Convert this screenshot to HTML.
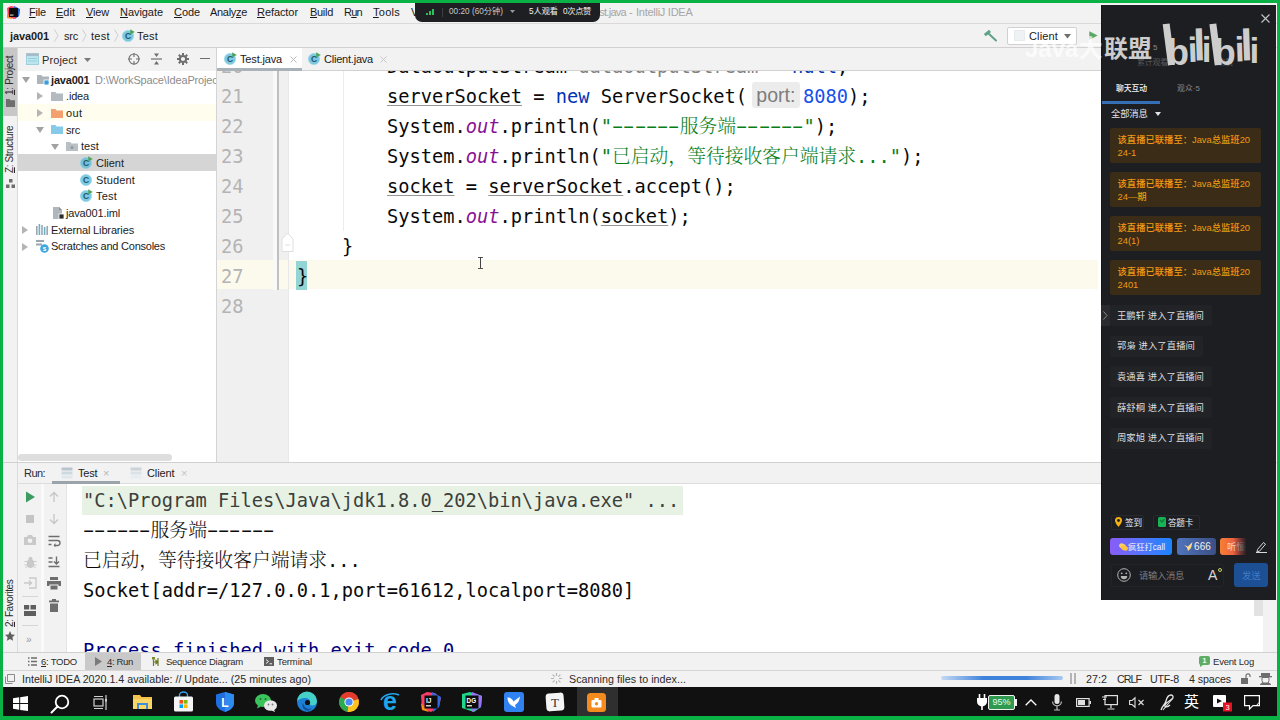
<!DOCTYPE html>
<html lang="zh">
<head>
<meta charset="utf-8">
<title>java001 - Test.java - IntelliJ IDEA</title>
<style>
*{box-sizing:border-box;margin:0;padding:0}
html,body{width:1280px;height:720px;overflow:hidden;background:#f2f2f2}
body{position:relative;font-family:"Liberation Sans","Noto Sans CJK SC",sans-serif;font-size:11px;color:#1c1c1c}
.a{position:absolute}
.t{position:absolute;white-space:nowrap;line-height:14px;height:14px}
.b{font-weight:bold}
.g{color:#8c8c8c}
svg{position:absolute;overflow:visible}
/* code */
.mono{font-family:"DejaVu Sans Mono","Liberation Mono",monospace;font-size:18.69px}
.code{position:absolute;white-space:pre;font-family:"DejaVu Sans Mono","Liberation Mono",monospace;font-size:18.69px;line-height:30px;height:30px;color:#0a0a0a}
.cj{line-height:0;font-weight:300;font-family:"Liberation Serif","Noto Serif CJK SC",serif;font-size:18.77px}
.kw{color:#0033b3}.st{color:#067d17}.nu{color:#1750eb}.sf{color:#871094;font-style:italic}
.un{text-decoration:underline;text-decoration-color:#969696;text-decoration-thickness:1px;text-underline-offset:1.5px}
.ln{position:absolute;left:221px;font-family:"DejaVu Sans Mono","Liberation Mono",monospace;font-size:18.69px;line-height:30px;height:30px;color:#b4b4b4;white-space:pre}
.hint{display:inline-block;font-family:"Liberation Sans",sans-serif;font-size:19.5px;line-height:26px;height:26px;background:#ececec;color:#7d7d7d;border-radius:3px;margin:0 3.5px 0 5px;padding:0 4px;width:47.5px;vertical-align:baseline;position:relative;top:-1px;text-align:center}
.m{color:#1a1a1a}
.v{transform-origin:0 0;transform:rotate(-90deg);font-size:10px;line-height:12px;height:12px;color:#2b2b2b}
.c{font-family:"Liberation Sans","Noto Sans CJK SC",sans-serif;font-size:9.330px;line-height:14px;height:14px}
.o{color:#ee9a14;font-weight:500}
.j{color:#dedede}
.nb{position:absolute;left:9px;width:151px;height:35px;background:#3b2c17;border-radius:2px}
.jb{position:absolute;left:9px;height:21px;background:#222327;border-radius:2px}
.d{display:inline-block;transform:scaleX(1.85)}
</style>
</head>
<body>
<svg width="0" height="0" style="position:absolute"><defs>
<g id="icC"><circle cx="6" cy="7" r="5.6" fill="#52b8d8" opacity=".75"/><circle cx="6" cy="7" r="5.6" fill="none" stroke="#8fd3e8" stroke-width=".6"/><text x="6" y="10.1" font-size="8.6" font-family="Liberation Sans, sans-serif" font-weight="bold" fill="#23566b" text-anchor="middle">C</text></g>
<g id="icRun"><path d="M8.2 0.2l4.6 2.7-4.6 2.7z" fill="#4ea55a"/></g>
<g id="icFold"><path d="M0 1h4.3l1.2 1.5H12V10H0z"/></g>
<g id="icArrR"><path d="M0 0l6 4-6 4z" fill="#b4b4b4"/></g>
<g id="icArrD"><path d="M0 0h8L4 6z" fill="#a2a2a2"/></g>
</defs></svg>
<!-- menubar -->
<div class="a" style="left:3px;top:3px;width:1274px;height:20px;background:#f2f2f2"></div>
<div class="a" style="left:3px;top:23px;width:1274px;height:1px;background:#d9d9d9"></div>
<svg style="left:7px;top:6px" width="13" height="13" viewBox="0 0 13 13"><path d="M0 2L4 0l5 1 4 3-1 6-5 3-6-2z" fill="#fc3e66"/><path d="M7 0l6 3-1 7-4 3z" fill="#2d6be0"/><path d="M0 7l5 6-5-1z" fill="#f98c1c"/><rect x="2" y="2" width="9" height="9" fill="#0d0d0d"/><rect x="3" y="8.6" width="3.5" height="0.9" fill="#fff"/></svg>
<div class="t m" style="left:29px;top:5px;letter-spacing:-0.188px"><u>F</u>ile</div>
<div class="t m" style="left:56px;top:5px;letter-spacing:0.008px"><u>E</u>dit</div>
<div class="t m" style="left:86px;top:5px;letter-spacing:-0.164px"><u>V</u>iew</div>
<div class="t m" style="left:120px;top:5px;letter-spacing:-0.055px"><u>N</u>avigate</div>
<div class="t m" style="left:174px;top:5px;letter-spacing:-0.078px"><u>C</u>ode</div>
<div class="t m" style="left:210px;top:5px;letter-spacing:-0.308px">Analy<u>z</u>e</div>
<div class="t m" style="left:257px;top:5px;letter-spacing:-0.074px"><u>R</u>efactor</div>
<div class="t m" style="left:310px;top:5px;letter-spacing:-0.294px"><u>B</u>uild</div>
<div class="t m" style="left:344px;top:5px;letter-spacing:-0.734px">R<u>u</u>n</div>
<div class="t m" style="left:373px;top:5px;letter-spacing:0.263px"><u>T</u>ools</div>
<div class="t m" style="left:411px;top:5px">VC<u>S</u></div>
<div class="t" style="left:589px;top:5px;color:#a6a6a6;letter-spacing:-0.714px">Test.java</div><div class="t" style="left:629px;top:5px;color:#a6a6a6">-</div><div class="t" style="left:636px;top:5px;color:#a6a6a6;letter-spacing:-0.263px">IntelliJ IDEA</div>

<!-- navbar -->
<div class="a" style="left:3px;top:24px;width:1274px;height:23px;background:#f2f2f2"></div>
<div class="a" style="left:3px;top:47px;width:1274px;height:1px;background:#d1d1d1"></div>
<div class="t b" style="left:10px;top:29px;letter-spacing:-0.109px">java001</div>
<svg style="left:54px;top:29px" width="5" height="13" viewBox="0 0 5 13"><path d="M0.5 0.5l3.5 6-3.5 6" stroke="#cfcfcf" fill="none"/></svg>
<div class="t" style="left:64px;top:29px;letter-spacing:-0.224px">src</div>
<svg style="left:82px;top:29px" width="5" height="13" viewBox="0 0 5 13"><path d="M0.5 0.5l3.5 6-3.5 6" stroke="#cfcfcf" fill="none"/></svg>
<div class="t" style="left:91px;top:29px;letter-spacing:0.316px">test</div>
<svg style="left:114px;top:29px" width="5" height="13" viewBox="0 0 5 13"><path d="M0.5 0.5l3.5 6-3.5 6" stroke="#cfcfcf" fill="none"/></svg>
<svg style="left:122px;top:29px" width="13" height="13" viewBox="0 0 13 13"><use href="#icC"/><use href="#icRun"/></svg>
<div class="t" style="left:137px;top:29px;letter-spacing:0.203px">Test</div>
<!-- right toolbar -->
<svg style="left:984px;top:30px" width="13" height="12" viewBox="0 0 13 12"><path d="M4.500 3.500L12 10.500" stroke="#5fa287" stroke-width="2" stroke-linecap="round"/><path d="M0.800 5.200L6 0.800" stroke="#5fa287" stroke-width="3"/></svg>
<div class="a" style="left:1007px;top:27px;width:70px;height:18px;background:#fff;border:1px solid #d0d0d0;border-radius:2px"></div>
<svg style="left:1014px;top:30px" width="11" height="11" viewBox="0 0 11 11"><rect x="0.5" y="0.5" width="10" height="10" fill="#eef2f5" stroke="#e6ebee"/></svg>
<div class="t" style="left:1029px;top:29px;letter-spacing:0.146px">Client</div>
<svg style="left:1064px;top:34px" width="7" height="4.500" viewBox="0 0 8 5"><path d="M0 0h8L4 5z" fill="#6e6e6e"/></svg>
<svg style="left:1089px;top:31px" width="9" height="9" viewBox="0 0 9 9"><path d="M0.300 0.300L8.700 4.500 0.300 8.700z" fill="#59a869"/></svg>

<!-- left stripe -->
<div class="a" style="left:3px;top:48px;width:15px;height:604px;background:#f2f2f2"></div>
<div class="a" style="left:3px;top:48px;width:15px;height:68px;background:#c7c7c7"></div>
<div class="a" style="left:17px;top:48px;width:1px;height:604px;background:#dadada"></div>
<div class="t v" style="left:4px;top:95px;letter-spacing:-0.300px"><u>1</u>: Project</div>
<svg style="left:6px;top:99px" width="9" height="8" viewBox="0 0 9 8"><path d="M0 0h3.5l1 1.2H9V8H0z" fill="#6e6e6e"/></svg>
<div class="t v" style="left:4px;top:173px;letter-spacing:-0.417px"><u>Z</u>: Structure</div>
<svg style="left:6px;top:179px" width="9" height="9" viewBox="0 0 9 9"><rect x="3" y="0" width="3.5" height="3.5" fill="#6e6e6e"/><rect x="0" y="5.5" width="3.5" height="3.5" fill="#6e6e6e"/><rect x="5.5" y="5.5" width="3.5" height="3.5" fill="#6e6e6e"/></svg>
<div class="t v" style="left:4px;top:627px;letter-spacing:-0.417px"><u>2</u>: Favorites</div>
<svg style="left:5px;top:631px" width="10" height="10" viewBox="0 0 10 10"><path d="M5 0l1.5 3.4 3.5.4-2.6 2.4.7 3.6L5 8 1.9 9.8l.7-3.6L0 3.8l3.5-.4z" fill="#5e5e5e"/></svg>

<!-- project panel -->
<div class="a" style="left:18px;top:48px;width:198px;height:23px;background:#f2f2f2"></div>
<div class="a" style="left:18px;top:71px;width:198px;height:391px;background:#fff"></div>
<div class="a" style="left:216px;top:48px;width:1px;height:414px;background:#d4d4d4"></div>
<svg style="left:26px;top:53px" width="13" height="12" viewBox="0 0 13 12"><rect x="0.5" y="0.5" width="12" height="11" fill="#bfe6ee" stroke="#9fcfdc"/><rect x="0.5" y="0.5" width="12" height="2.6" fill="#a9bcc6"/><path d="M2 5.5h9M2 8h9" stroke="#8fd0dd" stroke-width="1"/></svg>
<div class="t" style="left:42px;top:53px;color:#2b2b2b;letter-spacing:0.107px">Project</div>
<svg style="left:84px;top:58px" width="7" height="4" viewBox="0 0 7 4"><path d="M0 0h7L3.5 4z" fill="#7a7a7a"/></svg>
<svg style="left:128px;top:53px" width="12" height="12" viewBox="0 0 12 12"><circle cx="6" cy="6" r="5" fill="none" stroke="#6e6e6e" stroke-width="1.1"/><path d="M6 0v4M6 8v4M0 6h4M8 6h4" stroke="#6e6e6e" stroke-width="1.1"/></svg>
<svg style="left:151px;top:53px" width="11" height="12" viewBox="0 0 11 12"><path d="M0 6h11" stroke="#6e6e6e" stroke-width="1.2"/><path d="M3 0.5h5L5.5 4z" fill="#6e6e6e"/><path d="M3 11.5h5L5.500 8z" fill="#6e6e6e"/></svg>
<svg style="left:177px;top:53px" width="12" height="12" viewBox="0 0 12 12"><circle cx="6" cy="6" r="3.1" fill="none" stroke="#6e6e6e" stroke-width="2"/><g stroke="#6e6e6e" stroke-width="2"><path d="M6 0v2M6 10v2M0 6h2M10 6h2M1.8 1.8l1.4 1.4M8.8 8.8l1.400 1.4M1.8 10.2l1.4-1.4M8.800 3.2l1.4-1.4"/></g></svg>
<div class="a" style="left:200px;top:58px;width:10px;height:1px;background:#6e6e6e"></div>
<div class="a" style="left:18px;top:454px;width:154px;height:7px;border-radius:3.500px;background:#dedede"></div>
<!-- rows -->
<div class="a" style="left:18px;top:104px;width:198px;height:17px;background:#fefdee"></div>
<div class="a" style="left:18px;top:154px;width:198px;height:17px;background:#d5d5d5"></div>
<div class="a" style="left:18px;top:71px;width:198px;height:200px;overflow:hidden">
<div class="a" style="left:-18px;top:-71px;width:300px;height:400px">
<!-- row0 -->
<svg style="left:22px;top:77px" width="8" height="6" viewBox="0 0 8 6"><use href="#icArrD"/></svg>
<svg style="left:37px;top:74px" width="12" height="11" viewBox="0 0 12 11"><use href="#icFold" fill="#aeb5ba"/><rect x="7" y="6" width="5" height="5" fill="#3c9fd8" stroke="#fff" stroke-width=".8"/></svg>
<div class="t b" style="left:51px;top:73px;letter-spacing:-0.181px">java001</div>
<div class="t g" style="left:95px;top:73px;letter-spacing:-0.162px">D:\WorkSpace\IdeaProjects\ja</div>
<!-- row1 -->
<svg style="left:37px;top:92px" width="6" height="8" viewBox="0 0 6 8"><use href="#icArrR"/></svg>
<svg style="left:51px;top:91px" width="12" height="11" viewBox="0 0 12 11"><use href="#icFold" fill="#b3bac0"/></svg>
<div class="t" style="left:66px;top:89px;letter-spacing:-0.172px">.idea</div>
<!-- row2 -->
<svg style="left:37px;top:109px" width="6" height="8" viewBox="0 0 6 8"><use href="#icArrR"/></svg>
<svg style="left:51px;top:108px" width="12" height="11" viewBox="0 0 12 11"><use href="#icFold" fill="#f2a06e"/></svg>
<div class="t" style="left:66px;top:106px;letter-spacing:0.401px">out</div>
<!-- row3 -->
<svg style="left:36px;top:127px" width="8" height="6" viewBox="0 0 8 6"><use href="#icArrD"/></svg>
<svg style="left:51px;top:124px" width="12" height="11" viewBox="0 0 12 11"><use href="#icFold" fill="#85cbe9"/></svg>
<div class="t" style="left:66px;top:123px;letter-spacing:-0.224px">src</div>
<!-- row4 -->
<svg style="left:51px;top:144px" width="8" height="6" viewBox="0 0 8 6"><use href="#icArrD"/></svg>
<svg style="left:66px;top:141px" width="12" height="11" viewBox="0 0 12 11"><use href="#icFold" fill="#b9c0c5"/><circle cx="6" cy="6.500" r="1.5" fill="#8f989e"/></svg>
<div class="t" style="left:81px;top:139px;letter-spacing:0.066px">test</div>
<!-- row5 -->
<svg style="left:80px;top:156px" width="13" height="13" viewBox="0 0 13 13"><use href="#icC"/><use href="#icRun"/></svg>
<div class="t" style="left:96px;top:156px;letter-spacing:-0.021px">Client</div>
<!-- row6 -->
<svg style="left:80px;top:173px" width="13" height="13" viewBox="0 0 13 13"><use href="#icC"/></svg>
<div class="t" style="left:96px;top:173px;letter-spacing:0.154px">Student</div>
<!-- row7 -->
<svg style="left:80px;top:189px" width="13" height="13" viewBox="0 0 13 13"><use href="#icC"/><use href="#icRun"/></svg>
<div class="t" style="left:96px;top:189px;letter-spacing:0.203px">Test</div>
<!-- row8 -->
<svg style="left:53px;top:207px" width="11" height="12" viewBox="0 0 11 12"><path d="M0 0h6l3 3v9H0z" fill="#b0b7bc"/><path d="M6 0v3h3z" fill="#8a9399"/><rect x="6" y="7" width="5" height="5" fill="#2b2b2b" stroke="#fff" stroke-width=".8"/></svg>
<div class="t" style="left:66px;top:206px;letter-spacing:-0.149px">java001.iml</div>
<!-- row9 -->
<svg style="left:22px;top:226px" width="6" height="8" viewBox="0 0 6 8"><use href="#icArrR"/></svg>
<svg style="left:36px;top:224px" width="12" height="11" viewBox="0 0 12 11"><rect x="0" y="2" width="1.6" height="9" fill="#9aa7b0"/><rect x="2.600" y="0" width="1.6" height="11" fill="#6db0c8"/><rect x="5.2" y="1" width="1.6" height="10" fill="#9aa7b0"/><rect x="7.800" y="3" width="1.6" height="8" fill="#6db0c8"/><rect x="10.4" y="2" width="1.6" height="9" fill="#9aa7b0"/></svg>
<div class="t" style="left:51px;top:223px;letter-spacing:-0.144px">External Libraries</div>
<!-- row10 -->
<svg style="left:22px;top:243px" width="6" height="8" viewBox="0 0 6 8"><use href="#icArrR"/></svg>
<svg style="left:36px;top:240px" width="13" height="13" viewBox="0 0 13 13"><path d="M0 0h8v2H0zM0 3.500h6v2H0z" fill="#9aa7b0"/><circle cx="8.500" cy="8.5" r="4.3" fill="#3fa7e0"/><text x="8.5" y="11" font-size="6.5" font-weight="bold" font-family="Liberation Sans, sans-serif" fill="#fff" text-anchor="middle">s</text></svg>
<div class="t" style="left:51px;top:239px;letter-spacing:-0.238px">Scratches and Consoles</div>
</div></div>

<!-- editor tabs -->
<div class="a" style="left:217px;top:48px;width:1060px;height:22px;background:#f2f2f2"></div>
<div class="a" style="left:217px;top:70px;width:1046px;height:1px;background:#d1d1d1"></div>
<div class="a" style="left:217px;top:48px;width:85px;height:21px;background:#fff"></div>
<div class="a" style="left:217px;top:68px;width:85px;height:3px;background:#aab2b9"></div>
<svg style="left:224px;top:52px" width="13" height="13" viewBox="0 0 13 13"><use href="#icC"/><use href="#icRun"/></svg>
<div class="t" style="left:240px;top:52px;letter-spacing:-0.158px">Test.java</div>
<svg style="left:290px;top:56px" width="7" height="7" viewBox="0 0 7 7"><path d="M0.5 0.5l6 6M6.5 0.5l-6 6" stroke="#b9b9b9" stroke-width="1"/></svg>
<svg style="left:308px;top:52px" width="13" height="13" viewBox="0 0 13 13"><use href="#icC"/><use href="#icRun"/></svg>
<div class="t" style="left:324px;top:52px;letter-spacing:-0.214px">Client.java</div>
<svg style="left:380px;top:56px" width="7" height="7" viewBox="0 0 7 7"><path d="M0.5 0.5l6 6M6.5 0.5l-6 6" stroke="#c6c6c6" stroke-width="1"/></svg>
<!-- right stripe -->
<div class="a" style="left:1263px;top:48px;width:14px;height:604px;background:#f2f2f2"></div>
<div class="a" style="left:1262px;top:48px;width:1px;height:604px;background:#d6d6d6"></div>
<!-- editor -->
<div class="a" style="left:217px;top:71px;width:1046px;height:392px;background:#fff;overflow:hidden">
  <div class="a" style="left:0;top:0;width:72px;height:392px;background:#f0f0f0"></div>
  <div class="a" style="left:0;top:189px;width:881px;height:29px;background:#fcfaed"></div>
  <div class="a" style="left:56px;top:0;width:4px;height:219px;background:#f8f9f9"></div>
  <div class="a" style="left:60px;top:0;width:2px;height:219px;background:#c0c0c0"></div>
  <div class="a" style="left:71px;top:0;width:1px;height:392px;background:#e8e8e8"></div>
  <div class="a" style="left:126px;top:0;width:1px;height:160px;background:#ececec"></div>
  <div class="a" style="left:79px;top:190px;width:11px;height:29px;background:#93d4d4"></div>
</div>
<div class="a" style="left:217px;top:71px;width:900px;height:392px;overflow:hidden">
<div style="position:absolute;left:-217px;top:-71px;width:1280px;height:720px">
<div class="ln" style="top:52px">20</div>
<div class="ln" style="top:82px">21</div>
<div class="ln" style="top:112px">22</div>
<div class="ln" style="top:142px">23</div>
<div class="ln" style="top:172px">24</div>
<div class="ln" style="top:202px">25</div>
<div class="ln" style="top:232px">26</div>
<div class="ln" style="top:262px">27</div>
<div class="ln" style="top:292px">28</div>
<div class="code" style="left:387px;top:52px">DataOutputStream <span style="color:#808080">dataOutputStream</span> = <span class="kw">null</span>;</div>
<div class="code" style="left:387px;top:82px"><span class="un">serverSocket</span> = <span class="kw">new</span> ServerSocket(<span class="hint">port:</span><span class="nu">8080</span>);</div>
<div class="code" style="left:387px;top:112px">System.<span class="sf">out</span>.println(<span class="st">"<span class="d">-</span><span class="d">-</span><span class="d">-</span><span class="d">-</span><span class="d">-</span><span class="d">-</span><span class="cj">服务端</span><span class="d">-</span><span class="d">-</span><span class="d">-</span><span class="d">-</span><span class="d">-</span><span class="d">-</span>"</span>);</div>
<div class="code" style="left:387px;top:142px">System.<span class="sf">out</span>.println(<span class="st">"<span class="cj">已启动，等待接收客户端请求</span>..."</span>);</div>
<div class="code" style="left:387px;top:172px"><span class="un">socket</span> = <span class="un">serverSocket</span>.accept();</div>
<div class="code" style="left:387px;top:202px">System.<span class="sf">out</span>.println(<span class="un">socket</span>);</div>
<div class="code" style="left:342px;top:232px">}</div>
<div class="code" style="left:297px;top:262px">}</div>
<svg style="left:281px;top:232px" width="13" height="20" viewBox="0 0 13 20"><path d="M1 19.500V7L6.500 1 12 7v12.500z" fill="#fff" stroke="#dedede" stroke-width="1"/><path d="M4 13h5" stroke="#dedede"/></svg>
</div>
</div>
<!-- mouse I-beam -->
<div class="a" style="left:478px;top:257px;width:5px;height:1px;background:#555"></div>
<div class="a" style="left:480px;top:257px;width:1px;height:12px;background:#444"></div>
<div class="a" style="left:478px;top:268px;width:5px;height:1px;background:#555"></div>

<!-- run panel -->
<div class="a" style="left:3px;top:462px;width:1274px;height:1px;background:#d1d1d1"></div>
<div class="a" style="left:18px;top:463px;width:1245px;height:21px;background:#f2f2f2"></div>
<div class="a" style="left:18px;top:483px;width:1245px;height:1px;background:#dcdcdc"></div>
<div class="a" style="left:67px;top:484px;width:1196px;height:168px;background:#fff"></div>
<div class="a" style="left:41px;top:484px;width:3px;height:168px;background:#fafafa"></div>
<div class="a" style="left:66px;top:484px;width:1px;height:168px;background:#e4e4e4"></div>
<div class="a" style="left:22px;top:596px;width:16px;height:1px;background:#d6d6d6"></div>
<div class="a" style="left:22px;top:625px;width:16px;height:1px;background:#d6d6d6"></div>
<div class="t" style="left:24px;top:466px;color:#2b2b2b;letter-spacing:-0.562px">Run:</div>
<div class="a" style="left:52px;top:481px;width:68px;height:3px;background:#9ba4ab"></div>
<svg style="left:61px;top:467px" width="12" height="12" viewBox="0 0 12 12"><rect x="0.5" y="0.5" width="11" height="3" fill="#b9c4cc"/><rect x="0.5" y="4.5" width="11" height="3" fill="#cdd9e0"/><rect x="0.5" y="8.5" width="11" height="3" fill="#dfe7ec"/></svg>
<div class="t" style="left:78px;top:466px;letter-spacing:-0.172px">Test</div>
<div class="t" style="left:103px;top:466px;color:#b8b8b8;font-size:11px">×</div>
<svg style="left:130px;top:467px" width="12" height="12" viewBox="0 0 12 12"><rect x="0.5" y="0.5" width="11" height="3" fill="#c9d3d9"/><rect x="0.5" y="4.5" width="11" height="3" fill="#d9e2e7"/><rect x="0.5" y="8.5" width="11" height="3" fill="#e6ecef"/></svg>
<div class="t" style="left:147px;top:466px;letter-spacing:-0.104px">Client</div>
<div class="t" style="left:181px;top:466px;color:#c4c4c4;font-size:11px">×</div>
<!-- run toolbar icons col1 -->
<svg style="left:24px;top:491px" width="12" height="12" viewBox="0 0 12 12"><path d="M2 0.5 L11 6 L2 11.5 Z" fill="#3d9b62"/></svg>
<svg style="left:25px;top:514px" width="10" height="10" viewBox="0 0 10 10"><rect x="1" y="1" width="8" height="8" fill="#c4c4c4"/></svg>
<svg style="left:23px;top:534px" width="14" height="12" viewBox="0 0 14 12"><path d="M1 3h3l1-2h4l1 2h3v8H1z" fill="#c9c9c9"/><circle cx="7" cy="6.7" r="2.3" fill="#f2f2f2"/></svg>
<svg style="left:24px;top:556px" width="13" height="13" viewBox="0 0 13 13"><ellipse cx="6.5" cy="7.5" rx="3.6" ry="4.5" fill="#c9c9c9"/><circle cx="6.5" cy="2.8" r="2" fill="#c9c9c9"/><path d="M0.5 5.5h12M0.5 9h12M1.5 12l2-2M11.5 12l-2-2" stroke="#c9c9c9" stroke-width="1" fill="none"/></svg>
<svg style="left:24px;top:577px" width="13" height="12" viewBox="0 0 13 12"><path d="M5 1h7v10H5" stroke="#c9c9c9" stroke-width="1.3" fill="none"/><path d="M0 6h7M5 3.5l2.5 2.5L5 8.5" stroke="#c9c9c9" stroke-width="1.3" fill="none"/></svg>
<svg style="left:24px;top:605px" width="12" height="11" viewBox="0 0 12 11"><rect x="0" y="0" width="5.2" height="4.5" fill="#5e5e5e"/><rect x="6.5" y="0" width="5.5" height="4.5" fill="#5e5e5e"/><rect x="0" y="6" width="12" height="5" fill="#5e5e5e"/></svg>
<div class="t" style="left:26px;top:633px;color:#9a9a9a;font-size:10px">»</div>
<!-- col2 -->
<svg style="left:48px;top:491px" width="12" height="12" viewBox="0 0 12 12"><path d="M6 11V1.5M2 5.5l4-4 4 4" stroke="#c6c6c6" stroke-width="1.3" fill="none"/></svg>
<svg style="left:48px;top:513px" width="12" height="12" viewBox="0 0 12 12"><path d="M6 1v9.5M2 6.5l4 4 4-4" stroke="#c6c6c6" stroke-width="1.3" fill="none"/></svg>
<svg style="left:48px;top:535px" width="12" height="12" viewBox="0 0 12 12"><path d="M0.5 1.5h11M0.5 5.5h9a2 2 0 0 1 0 5H6M0.5 9.5h3" stroke="#6e6e6e" stroke-width="1.4" fill="none"/><path d="M7.5 8l-2 2.5 2 1.5z" fill="#6e6e6e"/></svg>
<svg style="left:48px;top:556px" width="12" height="12" viewBox="0 0 12 12"><path d="M0.5 2h4M0.5 6h4M0.5 10.5h11M8.5 0.5v7M6 5.5l2.5 2.5L11 5.5" stroke="#6e6e6e" stroke-width="1.4" fill="none"/></svg>
<svg style="left:47px;top:577px" width="14" height="13" viewBox="0 0 14 13"><rect x="3" y="0" width="8" height="3" fill="#6e6e6e"/><rect x="0" y="4" width="14" height="5" fill="#6e6e6e"/><rect x="3" y="8" width="8" height="5" fill="#6e6e6e" stroke="#f2f2f2" stroke-width="1"/></svg>
<svg style="left:48px;top:599px" width="12" height="13" viewBox="0 0 12 13"><rect x="1" y="1.5" width="10" height="1.8" fill="#6e6e6e"/><rect x="4" y="0" width="4" height="2" fill="#6e6e6e"/><path d="M2 4.5h8v8.5H2z" fill="#6e6e6e"/></svg>
<div class="a" style="left:1254px;top:600px;width:9px;height:16px;background:#e2e2e2"></div>
<!-- console -->
<div class="a" style="left:67px;top:484px;width:1196px;height:168px;overflow:hidden">
<div class="a" style="left:15px;top:2px;width:601px;height:29px;background:#e7f2e5"></div>
<div class="code" style="left:16px;top:2px;color:#3c3f3c">"C:\Program Files\Java\jdk1.8.0_202\bin\java.exe" ...</div>
<div class="code" style="left:16px;top:32px"><span class="d">-</span><span class="d">-</span><span class="d">-</span><span class="d">-</span><span class="d">-</span><span class="d">-</span><span class="cj">服务端</span><span class="d">-</span><span class="d">-</span><span class="d">-</span><span class="d">-</span><span class="d">-</span><span class="d">-</span></div>
<div class="code" style="left:16px;top:62px"><span class="cj">已启动，等待接收客户端请求</span>...</div>
<div class="code" style="left:16px;top:92px">Socket[addr=/127.0.0.1,port=61612,localport=8080]</div>
<div class="code" style="left:16px;top:152px;color:#00007f">Process finished with exit code 0</div>
</div>

<!-- bottom tool buttons -->
<div class="a" style="left:3px;top:652px;width:1274px;height:1px;background:#d1d1d1"></div>
<div class="a" style="left:3px;top:653px;width:1274px;height:17px;background:#f2f2f2"></div>
<div class="a" style="left:85px;top:653px;width:56px;height:17px;background:#c9c9c9"></div>
<svg style="left:28px;top:657px" width="9" height="9" viewBox="0 0 9 9"><path d="M0 1h1.5M3 1h6M0 4.5h1.5M3 4.5h6M0 8h1.5M3 8h6" stroke="#6e6e6e" stroke-width="1.4"/></svg>
<div class="t" style="left:41px;top:655px;color:#2b2b2b;letter-spacing:-0.241px;font-size:9.5px"><u>6</u>: TODO</div>
<svg style="left:95px;top:657px" width="7" height="9" viewBox="0 0 7 9"><path d="M0 0l7 4.5L0 9z" fill="#7a7a7a"/></svg>
<div class="t" style="left:107px;top:655px;color:#2b2b2b;letter-spacing:-0.336px;font-size:9.5px"><u>4</u>: Run</div>
<svg style="left:152px;top:657px" width="10" height="9" viewBox="0 0 10 9"><rect x="0" y="0" width="3" height="2.5" fill="#7b8a2f"/><path d="M1.5 2.5v6.5M6 1v8M1.5 5h4.5M6 5l-2-1.5v3z" stroke="#6b7a25" stroke-width="1.2" fill="#6b7a25"/></svg>
<div class="t" style="left:166px;top:655px;color:#2b2b2b;letter-spacing:-0.271px;font-size:9.5px">Sequence Diagram</div>
<svg style="left:264px;top:657px" width="10" height="9" viewBox="0 0 10 9"><rect x="0" y="0" width="10" height="9" fill="#5e5e5e"/><path d="M2 2.5l2.5 2L2 6.5M5.5 6.8h2.5" stroke="#f2f2f2" stroke-width="1" fill="none"/></svg>
<div class="t" style="left:277px;top:655px;color:#2b2b2b;letter-spacing:-0.113px;font-size:9.5px">Terminal</div>
<svg style="left:1199px;top:656px" width="11" height="11" viewBox="0 0 11 11"><path d="M0 2a2 2 0 0 1 2-2h7a2 2 0 0 1 2 2v5a2 2 0 0 1-2 2H4l-3 2v-2.3A2 2 0 0 1 0 7z" fill="#5fad65"/><text x="5.5" y="7.3" font-size="7" font-family="Liberation Sans, sans-serif" font-weight="bold" fill="#fff" text-anchor="middle">1</text></svg>
<div class="t" style="left:1213px;top:655px;color:#2b2b2b;letter-spacing:-0.200px;font-size:9.5px">Event Log</div>
<!-- status bar -->
<div class="a" style="left:3px;top:670px;width:1274px;height:1px;background:#d6d6d6"></div>
<div class="a" style="left:3px;top:671px;width:1274px;height:16px;background:#f2f2f2"></div>
<svg style="left:5px;top:674px" width="10" height="10" viewBox="0 0 10 10"><path d="M2.5 0.5h7v7h-7z" fill="#f2f2f2" stroke="#8a8a8a"/><path d="M0.5 2.5v7h7" fill="none" stroke="#8a8a8a"/></svg>
<div class="t" style="left:22px;top:672px;color:#2b2b2b;letter-spacing:0.004px;font-size:10.7px">IntelliJ IDEA 2020.1.4 available: // Update... (25 minutes ago)</div>
<svg style="left:551px;top:673px" width="11" height="11" viewBox="0 0 11 11"><g stroke="#b5b5b5" stroke-width="1.2"><path d="M5.5 0v3M5.5 8v3M0 5.5h3M8 5.5h3M1.6 1.6l2.1 2.1M7.3 7.3l2.1 2.1M1.6 9.4l2.1-2.1M7.3 3.7l2.1-2.1"/></g></svg>
<div class="t" style="left:569px;top:672px;color:#2b2b2b;letter-spacing:0.044px;font-size:10.7px">Scanning files to index...</div>
<div class="a" style="left:941px;top:676px;width:122px;height:4px;border-radius:2px;background:linear-gradient(90deg,#c4daf5,#3f82db 35%,#3f82db 70%,#a8c8f0)"></div>
<div class="a" style="left:1070px;top:673px;width:2px;height:11px;background:#b4b4b4"></div>
<div class="a" style="left:1074px;top:673px;width:2px;height:11px;background:#b4b4b4"></div>
<div class="t" style="left:1086px;top:672px;color:#2b2b2b;letter-spacing:0.047px;font-size:10.7px">27:2</div>
<div class="t" style="left:1117px;top:672px;color:#2b2b2b;letter-spacing:-0.980px;font-size:10.7px">CRLF</div>
<div class="t" style="left:1150px;top:672px;color:#2b2b2b;letter-spacing:-0.256px;font-size:10.7px">UTF-8</div>
<div class="t" style="left:1189px;top:672px;color:#2b2b2b;letter-spacing:-0.098px;font-size:10.7px">4 spaces</div>
<svg style="left:1241px;top:673px" width="10" height="11" viewBox="0 0 10 11"><rect x="0" y="5" width="7" height="6" fill="#6e6e6e"/><path d="M5 5V2.8a2 2 0 0 1 4 0V4" stroke="#6e6e6e" stroke-width="1.2" fill="none"/></svg>
<svg style="left:1259px;top:673px" width="13" height="12" viewBox="0 0 13 12"><rect x="2" y="0" width="9" height="3.5" fill="#6e6e6e"/><rect x="0" y="3" width="13" height="1.3" fill="#6e6e6e"/><path d="M3 4.5h7v3a3.5 3.5 0 0 1-7 0z" fill="none" stroke="#6e6e6e"/><path d="M1 12c0-2 2-2.5 5.5-2.5S12 10 12 12z" fill="#6e6e6e"/></svg>

<!-- taskbar -->
<div class="a" style="left:3px;top:687px;width:1274px;height:29px;background:#111111"></div>
<div class="a" style="left:577px;top:687px;width:41px;height:29px;background:#2f2f2f"></div>
<!-- windows -->
<svg style="left:13px;top:696px" width="15" height="15" viewBox="0 0 15 15"><path d="M0 2.2L6.2 1.300V7H0zM7.2 1.200L15 0v7H7.2zM0 8h6.2v5.700L0 12.800zM7.2 8H15v7l-7.800-1.100z" fill="#fff"/></svg>
<!-- search -->
<svg style="left:49px;top:693px" width="22" height="22" viewBox="0 0 22 22"><circle cx="13" cy="9" r="6.300" fill="none" stroke="#fff" stroke-width="1.800"/><path d="M8.500 13.500L2.500 19.500" stroke="#fff" stroke-width="2" stroke-linecap="round"/></svg>
<!-- task view -->
<svg style="left:93px;top:695px" width="16" height="15" viewBox="0 0 16 15"><rect x="1" y="4" width="9" height="7" fill="none" stroke="#d0d0d0" stroke-width="1.200"/><path d="M1 1.500h9M1 13.500h9M13 0v15" stroke="#d0d0d0" stroke-width="1.200"/><rect x="12" y="4" width="2" height="2.500" fill="#d0d0d0"/></svg>
<!-- explorer -->
<svg style="left:133px;top:693px" width="19" height="17" viewBox="0 0 19 17"><path d="M0 2h7l1.500 2H19v12H0z" fill="#f5c34a"/><path d="M0 6h19v10H0z" fill="#fbd667"/><rect x="4" y="10" width="11" height="6" fill="#3b8fdb"/><rect x="6" y="12" width="7" height="4" fill="#fbd667"/></svg>
<!-- store -->
<svg style="left:174px;top:692px" width="19" height="20" viewBox="0 0 19 20"><path d="M5.500 5V3a4 3 0 0 1 8 0v2" fill="none" stroke="#3aa0e8" stroke-width="1.400"/><rect x="0" y="4.500" width="19" height="15" rx="1.500" fill="#f5f5f5"/><rect x="5.500" y="8" width="3.600" height="3.600" fill="#f25022"/><rect x="9.900" y="8" width="3.600" height="3.600" fill="#7fba00"/><rect x="5.500" y="12.400" width="3.600" height="3.600" fill="#00a4ef"/><rect x="9.900" y="12.400" width="3.600" height="3.600" fill="#ffb900"/></svg>
<!-- L shield -->
<svg style="left:216px;top:692px" width="18" height="20" viewBox="0 0 18 20"><path d="M9 0l9 2.500v8c0 5-4 8-9 9.500-5-1.500-9-4.500-9-9.500v-8z" fill="#1f6fe0"/><path d="M9 0l9 2.500v8c0 5-4 8-9 9.500z" fill="#2c8cf0"/><text x="9" y="14.500" font-size="12" font-weight="bold" font-family="Liberation Sans, sans-serif" fill="#fff" text-anchor="middle">L</text></svg>
<!-- wechat -->
<svg style="left:255px;top:694px" width="22" height="18" viewBox="0 0 22 18"><ellipse cx="8" cy="6.500" rx="8" ry="6.500" fill="#3bc45b"/><path d="M3 11l-1 3.500 4-2z" fill="#3bc45b"/><ellipse cx="15.500" cy="11.500" rx="6.500" ry="5.300" fill="#e9e9e9"/><path d="M19 15.500l1 2.500-3.500-1.500z" fill="#e9e9e9"/><circle cx="5.500" cy="5" r="1" fill="#1d6e33"/><circle cx="10.500" cy="5" r="1" fill="#1d6e33"/><circle cx="13.500" cy="10.500" r=".9" fill="#777"/><circle cx="17.500" cy="10.500" r=".9" fill="#777"/></svg>
<!-- edge -->
<svg style="left:297px;top:692px" width="20" height="20" viewBox="0 0 20 20"><circle cx="10" cy="10" r="10" fill="#1e7fd6"/><path d="M0 10a10 10 0 0 1 20-1c0 3-2 4.500-4.500 4.500-2 0-3-1-3-2 0-.8.500-1.200.500-2 0-2-2-3.500-4.500-3.500C4 6 .5 8 0 10z" fill="#45d0c8"/><path d="M6 11a5 5 0 0 0 9 5c-2 1.500-5 1-6.500-.5C7 14 6.500 12.500 6 11z" fill="#11539a"/><circle cx="10.500" cy="10.500" r="2.600" fill="#111"/></svg>
<!-- chrome -->
<svg style="left:339px;top:692px" width="20" height="20" viewBox="0 0 20 20"><circle cx="10" cy="10" r="10" fill="#e33b2e"/><path d="M10 10L1.400 5A10 10 0 0 0 8.500 19.900z" fill="#2da94f"/><path d="M10 10l-1.500 9.900A10 10 0 0 0 19.500 7z" fill="#fcc31e"/><path d="M10 6h9.200A10 10 0 0 0 1.400 5z" fill="#e33b2e"/><circle cx="10" cy="10" r="4.600" fill="#fff"/><circle cx="10" cy="10" r="3.600" fill="#4a8af4"/></svg>
<!-- IE -->
<svg style="left:380px;top:692px" width="20" height="20" viewBox="0 0 20 20"><text x="10" y="17.500" font-size="25" font-weight="bold" font-family="Liberation Sans, sans-serif" fill="#1ea7ea" text-anchor="middle">e</text><path d="M1 8C3 3 12 0 19 3" stroke="#1ea7ea" stroke-width="1.600" fill="none"/></svg>
<!-- IJ -->
<svg style="left:421px;top:692px" width="20" height="20" viewBox="0 0 20 20"><path d="M0 3L6 0l8 1 6 5-2 9-8 5-9-3z" fill="#fc3e66"/><path d="M11 0l9 5-2 10-6 5z" fill="#2d6be0"/><path d="M0 11l8 9-7-2z" fill="#f98c1c"/><rect x="3.500" y="3.500" width="13" height="13" fill="#0d0d0d"/><text x="5" y="10.500" font-size="6.500" font-weight="bold" font-family="Liberation Sans, sans-serif" fill="#fff">IJ</text><rect x="5" y="13.200" width="5" height="1.200" fill="#fff"/></svg>
<!-- DG -->
<svg style="left:462px;top:692px" width="20" height="20" viewBox="0 0 20 20"><path d="M0 2l8-2 12 4-1 11-7 5-12-4z" fill="#21d789"/><path d="M10 0l10 4-1 11-9 5z" fill="#9775f8"/><rect x="3.500" y="3.500" width="13" height="13" fill="#0d0d0d"/><text x="4.600" y="10.500" font-size="6.300" font-weight="bold" font-family="Liberation Sans, sans-serif" fill="#fff">DG</text><rect x="5" y="13.200" width="5" height="1.200" fill="#fff"/></svg>
<!-- bird -->
<svg style="left:504px;top:692px" width="20" height="20" viewBox="0 0 20 20"><rect width="20" height="20" rx="3" fill="#2f82f0"/><path d="M3.500 5.500c3 0 5 1.500 6 4l6.500-5c-.5 4-2 7-5 8.500l1 3-3.500-2c-3-1-5-4.500-5-8.500z" fill="#fff"/></svg>
<!-- T -->
<svg style="left:545px;top:692px" width="20" height="20" viewBox="0 0 20 20"><rect x="1" y="1" width="18" height="18" rx="3.500" fill="#f4f4f4" transform="rotate(-4 10 10)"/><text x="10" y="15" font-size="13" font-family="Liberation Serif, serif" fill="#333" text-anchor="middle">T</text></svg>
<!-- orange -->
<svg style="left:587px;top:693px" width="19" height="19" viewBox="0 0 19 19"><rect width="19" height="19" rx="3.500" fill="#f58a1f"/><rect x="4.500" y="7" width="10" height="7.500" rx="1" fill="#fff"/><rect x="7.500" y="5" width="4" height="2.500" fill="#fff"/><circle cx="9.500" cy="10.700" r="1.700" fill="#f58a1f"/></svg>
<!-- tray -->
<svg style="left:977px;top:694px" width="10" height="16" viewBox="0 0 10 16"><path d="M2.500 0v4M7.500 0v4" stroke="#fff" stroke-width="1.600"/><path d="M0 4h10v3.500a5 5 0 0 1-10 0z" fill="#fff"/><path d="M5 12v4" stroke="#fff" stroke-width="1.600"/></svg>
<div class="a" style="left:988px;top:695px;width:27px;height:15px;border:1.500px solid #f0f0f0;border-radius:2px;background:#2f9a4f"></div>
<div class="a" style="left:1015px;top:699px;width:2px;height:7px;background:#f0f0f0"></div>
<div class="t" style="left:992.500px;top:696px;color:#e8ffe8;font-size:9px;line-height:13px;height:13px;letter-spacing:-0.005px">95%</div>
<svg style="left:1025px;top:699px" width="12" height="7" viewBox="0 0 12 7"><path d="M0.700 6.300L6 1l5.300 5.300" stroke="#fff" stroke-width="1.300" fill="none"/></svg>
<svg style="left:1052px;top:694px" width="10" height="17" viewBox="0 0 10 17"><rect x="2.500" y="0" width="5" height="10" rx="2.500" fill="#e6e6e6"/><path d="M0.600 7.500a4.400 4.400 0 0 0 8.800 0M5 12v3.500M2 16h6" stroke="#bdbdbd" stroke-width="1.200" fill="none"/></svg>
<svg style="left:1076px;top:698px" width="15" height="9" viewBox="0 0 15 9"><rect x="0.600" y="0.600" width="12.500" height="7.800" fill="none" stroke="#e0e0e0" stroke-width="1.200"/><rect x="13.500" y="3" width="1.500" height="3" fill="#e0e0e0"/><rect x="2" y="2" width="7" height="5" fill="#e0e0e0"/></svg>
<svg style="left:1102px;top:695px" width="16" height="15" viewBox="0 0 16 15"><rect x="3" y="0.600" width="12.400" height="9" fill="none" stroke="#e0e0e0" stroke-width="1.200"/><path d="M9 10v3M5.500 14h7" stroke="#e0e0e0" stroke-width="1.200"/><path d="M0 2h5M1 4.500h3" stroke="#e0e0e0" stroke-width="1"/></svg>
<svg style="left:1129px;top:697px" width="17" height="11" viewBox="0 0 17 11"><path d="M0.600 3.500h2.500L6 0.800v9.400L3.100 7.500H0.600z" fill="none" stroke="#e0e0e0" stroke-width="1.100"/><path d="M9.500 3l5 5M14.500 3l-5 5" stroke="#e0e0e0" stroke-width="1.100"/></svg>
<svg style="left:1160px;top:694px" width="15" height="17" viewBox="0 0 15 17"><path d="M1 16c1-4 4-5 5-9s3-6 5-6 3 2 1 4-6 3-7 6 3 2 5 0" stroke="#e6e6e6" stroke-width="1.300" fill="none"/><path d="M3 16L13 4" stroke="#e6e6e6" stroke-width="1.100"/></svg>
<div class="t" style="left:1184px;top:693px;color:#fff;font-size:15px;line-height:18px;height:18px;font-family:'Liberation Sans','Noto Sans CJK SC',sans-serif">英</div>
<svg style="left:1213px;top:694px" width="20" height="19" viewBox="0 0 20 19"><rect x="0" y="1" width="13" height="12" rx="1" fill="#fff"/><path d="M4 4.500v5l5-2.500z" fill="#111"/><rect x="10" y="8.500" width="9" height="9" fill="#e81123"/><text x="14.500" y="16" font-size="7.500" font-family="Liberation Sans, sans-serif" fill="#fff" text-anchor="middle">3</text></svg>
<svg style="left:1244px;top:695px" width="16" height="15" viewBox="0 0 16 15"><path d="M0.600 0.600h14.800v10H9l-3.500 3.500v-3.500H0.600z" fill="none" stroke="#fff" stroke-width="1.200"/><path d="M12.500 10.500l2.500-3" stroke="#fff" stroke-width="1"/></svg>

<!-- live status pill -->
<div class="a" style="left:415px;top:2px;width:185px;height:20px;background:#1e1f22;border-radius:0 0 7px 7px"></div>
<div class="a" style="left:426px;top:13px;width:2px;height:2px;background:#2fbf5f"></div>
<div class="a" style="left:429px;top:11px;width:2px;height:4px;background:#2fbf5f"></div>
<div class="a" style="left:432px;top:9px;width:2px;height:6px;background:#2fbf5f"></div>
<div class="a" style="left:442px;top:8px;width:1px;height:9px;background:#3d3e42"></div>
<div class="t c" style="left:449px;top:5px;color:#c9c9c9;font-size:8.2px;letter-spacing:0.025px">00:20 (60分钟)</div>
<svg style="left:510px;top:10px" width="5" height="3" viewBox="0 0 5 3"><path d="M0 0h5L2.500 3z" fill="#9a9a9a"/></svg>
<div class="t c" style="left:529px;top:5px;color:#f2f2f2;font-size:8.2px;letter-spacing:-0.031px">5人观看</div>
<div class="t c" style="left:563px;top:5px;color:#f2f2f2;font-size:8.2px;letter-spacing:-0.281px">0次点赞</div>

<!-- chat panel -->
<div class="a" style="left:1101px;top:5px;width:175px;height:595px;background:#1d1e21;overflow:hidden">
 <div class="a" style="left:0;top:0;width:1px;height:595px;background:#141517"></div>
 <!-- header stats (mostly hidden behind watermark) -->
 <div class="t c" style="left:52px;top:36px;color:#8a8a8a;font-size:8px">5</div>
 <div class="t c" style="left:36px;top:51px;color:#55575c;font-size:8px;letter-spacing:-0.250px">累计观看</div>
 <div class="t c" style="left:117px;top:51px;color:#55575c;font-size:8px;letter-spacing:-0.500px">点赞</div>
 <svg style="left:160px;top:9px" width="9" height="9" viewBox="0 0 9 9"><path d="M0.500 0.500l8 8M8.500 0.500l-8 8" stroke="#c4c4c4" stroke-width="1.100"/></svg>
 <!-- tabs -->
 <div class="t c" style="left:15px;top:76.5px;color:#f4f4f4;font-weight:500;font-size:7.8px;letter-spacing:-0.047px">聊天互动</div>
 <div class="t c" style="left:76px;top:76.5px;color:#85888d;font-size:7.8px;letter-spacing:0.117px">观众·5</div>
 <div class="a" style="left:1px;top:96px;width:58px;height:3px;background:#356fb8"></div>
 <div class="t c" style="left:10px;top:102px;color:#e4e4e4;letter-spacing:-0.203px">全部消息</div>
 <svg style="left:54px;top:107px" width="6" height="4" viewBox="0 0 6 4"><path d="M0 0h6L3 4z" fill="#e4e4e4"/></svg>
 <!-- system notices -->
 <div class="nb" style="top:123px"></div>
 <div class="t c o" style="left:16.500px;top:128px;letter-spacing:-0.012px">该直播已联播至：Java总监班20</div>
 <div class="t c o" style="left:16.500px;top:140.500px">24-1</div>
 <div class="nb" style="top:167px"></div>
 <div class="t c o" style="left:16.500px;top:172px;letter-spacing:-0.012px">该直播已联播至：Java总监班20</div>
 <div class="t c o" style="left:16.500px;top:184.500px">24—期</div>
 <div class="nb" style="top:211px"></div>
 <div class="t c o" style="left:16.500px;top:216px;letter-spacing:-0.012px">该直播已联播至：Java总监班20</div>
 <div class="t c o" style="left:16.500px;top:228.500px">24(1)</div>
 <div class="nb" style="top:255px"></div>
 <div class="t c o" style="left:16.500px;top:260px;letter-spacing:-0.012px">该直播已联播至：Java总监班20</div>
 <div class="t c o" style="left:16.500px;top:272.500px">2401</div>
 <!-- handle -->
 <div class="a" style="left:0;top:300px;width:9px;height:21px;background:#2a2b2f"></div>
 <svg style="left:2px;top:306px" width="5" height="9" viewBox="0 0 5 9"><path d="M0.500 0.500l3.500 4-3.500 4" stroke="#8a8a8a" fill="none"/></svg>
 <!-- join messages -->
 <div class="jb" style="top:300px;width:102px"></div>
 <div class="t c j" style="left:16px;top:303.500px;letter-spacing:0.045px">王鹏轩 进入了直播间</div>
 <div class="jb" style="top:330.700px;width:93px"></div>
 <div class="t c j" style="left:16px;top:334.200px;letter-spacing:0.087px">郭枭 进入了直播间</div>
 <div class="jb" style="top:361.400px;width:102px"></div>
 <div class="t c j" style="left:16px;top:364.900px;letter-spacing:0.045px">袁通喜 进入了直播间</div>
 <div class="jb" style="top:392.100px;width:102px"></div>
 <div class="t c j" style="left:16px;top:395.600px;letter-spacing:0.045px">薛舒桐 进入了直播间</div>
 <div class="jb" style="top:422.800px;width:102px"></div>
 <div class="t c j" style="left:16px;top:426.300px;letter-spacing:0.045px">周家旭 进入了直播间</div>
 <!-- chips -->
 <div class="a" style="left:10px;top:510px;width:33px;height:15px;border:1px solid #28292d;border-radius:2px"></div>
 <svg style="left:14px;top:512px" width="7" height="10" viewBox="0 0 7 10"><path d="M3.500 0a3.500 3.500 0 0 1 3.500 3.500c0 2.500-3.500 6.500-3.500 6.500S0 6 0 3.500A3.500 3.500 0 0 1 3.500 0z" fill="#f5b014"/><circle cx="3.500" cy="3.500" r="1.400" fill="#1d1e21"/></svg>
 <div class="t c" style="left:24px;top:510.500px;color:#ececec;font-size:8.600px;letter-spacing:-0.102px">签到</div>
 <div class="a" style="left:52px;top:510px;width:47px;height:15px;border:1px solid #28292d;border-radius:2px"></div>
 <svg style="left:57px;top:512px" width="8" height="10" viewBox="0 0 8 10"><rect width="8" height="10" rx="1.500" fill="#18b356"/><path d="M2 3l2 2 2.500-3" stroke="#0d7a38" stroke-width="1.200" fill="none"/></svg>
 <div class="t c" style="left:67px;top:510.500px;color:#ececec;font-size:8.600px;letter-spacing:-0.266px">答题卡</div>
 <!-- quick buttons -->
 <div class="a" style="left:9px;top:533px;width:62px;height:17px;border-radius:3px;background:linear-gradient(90deg,#8a5cf7,#4f77fb 55%,#1c84ff)"></div>
 <svg style="left:18px;top:538px" width="9" height="8" viewBox="0 0 9 8"><ellipse cx="3.500" cy="3" rx="3.500" ry="2.500" fill="#ffd25e" transform="rotate(20 3.500 3)"/><ellipse cx="5.500" cy="5" rx="3.500" ry="2.500" fill="#ffc23a" transform="rotate(20 5.500 5)"/></svg>
 <div class="t c" style="left:27px;top:534.500px;color:#f4f4ff;font-size:8.3px;letter-spacing:-0.049px">疯狂打call</div>
 <div class="a" style="left:76px;top:533px;width:39px;height:17px;border-radius:3px;background:linear-gradient(90deg,#4f74bd,#3c4f85)"></div>
 <svg style="left:83px;top:537px" width="9" height="9" viewBox="0 0 9 9"><path d="M0 3l4 1.500L8.500 0 7 6 4 9 3 5.500z" fill="#ffd98a"/><path d="M3 5.500L8.500 0 4 4.500z" fill="#f0a93a"/></svg>
 <div class="t c" style="left:93px;top:534.500px;color:#f0f0f0;font-size:10px;letter-spacing:0.104px">666</div>
 <div class="a" style="left:119px;top:533px;width:27px;height:17px;border-radius:3px 0 0 3px;background:linear-gradient(90deg,#f77f34,#e2454c)"></div>
 <div class="t c" style="left:126px;top:534.500px;color:#ffd9cf;letter-spacing:0.172px">听懂</div>
 <div class="a" style="left:132px;top:532px;width:16px;height:19px;background:linear-gradient(90deg,rgba(29,30,33,0),#1d1e21 85%)"></div>
 <svg style="left:155px;top:536px" width="11" height="12" viewBox="0 0 11 12"><path d="M1.500 8.500l6-7 2 1.700-6 7-2.500.800z" fill="none" stroke="#d8d8d8" stroke-width="1"/><path d="M0 11.500h11" stroke="#d8d8d8" stroke-width="1"/></svg>
 <!-- input -->
 <div class="a" style="left:10px;top:559px;width:113px;height:23px;background:#1c1d20;border:1px solid #232428;border-radius:2px"></div>
 <svg style="left:16px;top:563px" width="14" height="14" viewBox="0 0 14 14"><circle cx="7" cy="7" r="6.300" fill="none" stroke="#b4b4b4" stroke-width="1"/><circle cx="4.700" cy="5.300" r=".9" fill="#b4b4b4"/><circle cx="9.300" cy="5.300" r=".9" fill="#b4b4b4"/><path d="M3.800 8h6.400a3.200 3.200 0 0 1-6.400 0z" fill="#b4b4b4"/></svg>
 <div class="t c" style="left:38px;top:563.500px;color:#7b7c80;letter-spacing:-0.328px">请输入消息</div>
 <div class="t" style="left:107px;top:562px;color:#d8d8d8;font-size:14px;line-height:16px;height:16px">A</div>
 <div class="a" style="left:116.500px;top:563px;width:4px;height:4px;border-radius:50%;border:1px solid #c9d96a"></div>
 <div class="a" style="left:133px;top:558px;width:34px;height:24px;border-radius:3px;background:#1c4f93"></div>
 <div class="t c" style="left:141px;top:563.500px;color:#3f7cc9;letter-spacing:-0.078px">发送</div>
</div>

<!-- watermark -->
<div class="t" style="left:1025px;top:34px;font-family:'Liberation Sans','Noto Sans CJK SC',sans-serif;font-weight:bold;font-size:24px;line-height:30px;height:30px;color:#fff;opacity:.7;letter-spacing:0">Java大</div>
<div class="t" style="left:1104px;top:34px;font-family:'Liberation Sans','Noto Sans CJK SC',sans-serif;font-weight:bold;font-size:24px;line-height:30px;height:30px;color:#cdcdcd;letter-spacing:0">联盟</div>
<svg style="left:0;top:0" width="1280" height="80" viewBox="0 0 1280 80"><g fill="#cdcdcd">
<rect x="1168" y="23.500" width="7" height="41.500" transform="rotate(-7.400 1171.500 65)"/>
<rect x="1214.700" y="23.500" width="7" height="41.500" transform="rotate(-7.400 1218.200 65)"/>
<text font-family="Liberation Sans, sans-serif" font-weight="bold"><tspan x="1167" y="65" font-size="36">b</tspan><tspan x="1188.300" y="62" font-size="35" rotate="-2">i</tspan><tspan x="1193.800" y="60.500" font-size="44" rotate="-2">l</tspan><tspan x="1201.800" y="62.300" font-size="35">i</tspan><tspan x="1213.700" y="65" font-size="36">b</tspan><tspan x="1235.300" y="61.500" font-size="35" rotate="-2">i</tspan><tspan x="1241" y="60.500" font-size="44" rotate="-2">l</tspan><tspan x="1249.500" y="62.700" font-size="35">i</tspan></text></g></svg>

<!-- green frame -->
<div class="a" style="left:0;top:0;width:1280px;height:3px;background:#0ab144"></div>
<div class="a" style="left:0;top:0;width:3px;height:720px;background:#0ab144"></div>
<div class="a" style="left:1277px;top:0;width:3px;height:720px;background:#0ab144"></div>
<div class="a" style="left:0;top:716px;width:1280px;height:4px;background:#0ab144"></div>
</body>
</html>
